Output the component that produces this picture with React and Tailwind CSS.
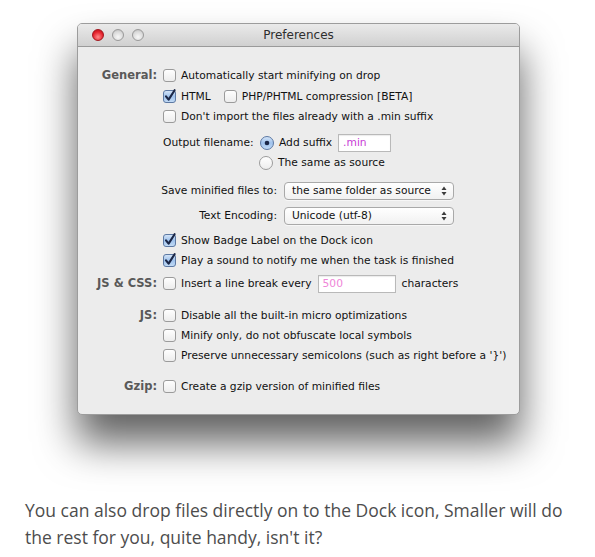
import { Fragment } from "react";

const ui = { fontFamily: '"DejaVu Sans", "Liberation Sans", sans-serif' };

function Checkbox({ checked = false }) {
    return (
        <svg width="13" height="13" viewBox="0 0 13 13" className="shrink-0 overflow-visible">
            <defs>
                <linearGradient id="cbOff" x1="0" y1="0" x2="0" y2="1">
                    <stop offset="0" stopColor="#ffffff" />
                    <stop offset="1" stopColor="#ececec" />
                </linearGradient>
                <linearGradient id="cbOn" x1="0" y1="0" x2="0" y2="1">
                    <stop offset="0" stopColor="#d7e6f8" />
                    <stop offset="0.5" stopColor="#9fc2ec" />
                    <stop offset="1" stopColor="#c4dcf6" />
                </linearGradient>
            </defs>
            <rect
                x="0.5"
                y="0.5"
                width="12"
                height="12"
                rx="2.5"
                fill={checked ? "url(#cbOn)" : "url(#cbOff)"}
                stroke={checked ? "#5d79a3" : "#9b9b9b"}
            />
            {checked && (
                <path
                    d="M3 6.3 L5.6 9.6 L11.6 0.2"
                    fill="none"
                    stroke="#1b2747"
                    strokeWidth="2.1"
                    strokeLinecap="round"
                    strokeLinejoin="round"
                />
            )}
        </svg>
    );
}

function Radio({ checked = false }) {
    return (
        <svg width="14" height="14" viewBox="0 0 14 14" className="shrink-0">
            <defs>
                <linearGradient id="rdOff" x1="0" y1="0" x2="0" y2="1">
                    <stop offset="0" stopColor="#ffffff" />
                    <stop offset="1" stopColor="#ececec" />
                </linearGradient>
                <linearGradient id="rdOn" x1="0" y1="0" x2="0" y2="1">
                    <stop offset="0" stopColor="#d7e6f8" />
                    <stop offset="0.5" stopColor="#9fc2ec" />
                    <stop offset="1" stopColor="#c4dcf6" />
                </linearGradient>
            </defs>
            <circle
                cx="7"
                cy="7"
                r="6.5"
                fill={checked ? "url(#rdOn)" : "url(#rdOff)"}
                stroke={checked ? "#5d79a3" : "#9b9b9b"}
            />
            {checked && <circle cx="7" cy="7" r="2.3" fill="#1b2747" />}
        </svg>
    );
}

function Check({ checked, children }) {
    return (
        <div className="flex items-center gap-[5px]">
            <Checkbox checked={checked} />
            <span>{children}</span>
        </div>
    );
}

function Field({ value, width, pale }) {
    return (
        <div
            className={`flex h-[18px] items-center border border-[#b9b9b9] bg-white pl-[4px] shadow-[inset_0_1px_1px_rgba(0,0,0,0.08)] ${width} ${
                pale ? "text-[#ef86d8]" : "text-[#c83cd6]"
            }`}
        >
            {value}
        </div>
    );
}

function Popup({ value }) {
    return (
        <div className="flex h-[18px] w-[170px] items-center justify-between rounded-[4px] border border-[#a9a9a9] bg-[linear-gradient(#ffffff,#f1f1f1)] pl-[7px] pr-[6px] shadow-[0_1px_0_rgba(255,255,255,0.6)]">
            <span>{value}</span>
            <svg width="6" height="10" viewBox="0 0 6 10">
                <path d="M3 0.5 L5.5 4 L0.5 4 Z" fill="#3c3c3c" />
                <path d="M3 9.5 L5.5 6 L0.5 6 Z" fill="#3c3c3c" />
            </svg>
        </div>
    );
}

function PopupRow({ label, value }) {
    return (
        <div className="flex items-center gap-[7px]">
            <div className="flex w-[114px] justify-end">
                <span className="shrink-0 whitespace-nowrap">{label}</span>
            </div>
            <Popup value={value} />
        </div>
    );
}

const sections = [
    { label: "General:", mt: "", content: <Check>Automatically start minifying on drop</Check> },
    {
        mt: "mt-[1px]",
        content: (
            <div className="flex items-center gap-[13px]">
                <Check checked>HTML</Check>
                <Check>PHP/PHTML compression [BETA]</Check>
            </div>
        ),
    },
    { mt: "", content: <Check>Don't import the files already with a .min suffix</Check> },
    {
        mt: "mt-[6px]",
        content: (
            <div className="flex items-center">
                <span className="w-[97px]">Output filename:</span>
                <div className="flex items-center gap-[5px]">
                    <Radio checked />
                    <span>Add suffix</span>
                    <Field value=".min" width="ml-[1px] w-[53px]" />
                </div>
            </div>
        ),
    },
    {
        mt: "",
        content: (
            <div className="flex items-center gap-[5px] pl-[96px]">
                <Radio />
                <span>The same as source</span>
            </div>
        ),
    },
    {
        mt: "mt-[8px]",
        content: <PopupRow label="Save minified files to:" value="the same folder as source" />,
    },
    {
        mt: "mt-[5px]",
        content: <PopupRow label="Text Encoding:" value="Unicode (utf-8)" />,
    },
    { mt: "mt-[5px]", content: <Check checked>Show Badge Label on the Dock icon</Check> },
    { mt: "", content: <Check checked>Play a sound to notify me when the task is finished</Check> },
    {
        label: "JS & CSS:",
        mt: "mt-[3px]",
        content: (
            <div className="flex items-center gap-[6px]">
                <Check>Insert a line break every</Check>
                <Field value="500" width="w-[78px]" pale />
                <span>characters</span>
            </div>
        ),
    },
    { label: "JS:", mt: "mt-[12px]", content: <Check>Disable all the built-in micro optimizations</Check> },
    { mt: "", content: <Check>Minify only, do not obfuscate local symbols</Check> },
    { mt: "", content: <Check>Preserve unnecessary semicolons (such as right before a '}')</Check> },
    { label: "Gzip:", mt: "mt-[11px]", content: <Check>Create a gzip version of minified files</Check> },
];

function TrafficLight({ red }) {
    return (
        <span
            className={`h-[12px] w-[12px] rounded-full border ${
                red
                    ? "border-[#a3141c] bg-[radial-gradient(circle_at_50%_70%,#ff8a8a,#e5222c_60%,#b0131b)]"
                    : "border-[#9a9a9a] bg-[radial-gradient(circle_at_50%_70%,#f8f8f8,#dadada_60%,#b5b5b5)]"
            }`}
        />
    );
}

export default function App() {
    return (
        <div className="min-h-[557px] bg-white pt-[23px]">
            <div
                className="ml-[77px] w-[443px] overflow-hidden rounded-[5px] border border-[#9c9c9c] bg-[#ececec] text-[10.7px] text-[#111] shadow-[0_28px_40px_rgba(0,0,0,0.62)]"
                style={ui}
            >
                <div className="relative flex h-[23px] items-center border-b border-[#9a9a9a] bg-[linear-gradient(#eaeaea,#d0d0d0)] px-[14px]">
                    <div className="flex items-center gap-[8px]">
                        <TrafficLight red />
                        <TrafficLight />
                        <TrafficLight />
                    </div>
                    <span className="absolute inset-x-0 text-center text-[12px] text-[#2e2e2e]">
                        Preferences
                    </span>
                </div>

                <div className="grid grid-cols-[79px_1fr] gap-x-[6px] pb-[17px] pt-[19px]">
                    {sections.map((row, i) => (
                        <Fragment key={i}>
                            <div
                                className={`flex h-[20px] items-center justify-end whitespace-nowrap text-[11.5px] font-bold text-[#595959] ${row.mt}`}
                            >
                                {row.label}
                            </div>
                            <div className={`flex h-[20px] items-center ${row.mt}`}>{row.content}</div>
                        </Fragment>
                    ))}
                </div>
            </div>

            <p
                className="ml-[25px] mt-[82px] w-[560px] text-[17.5px] leading-[27px] text-[#4d4d4d]"
                style={{ fontFamily: '"Open Sans", Lato, sans-serif' }}
            >
                You can also drop files directly on to the Dock icon, Smaller will do the rest for you,
                quite handy, isn't it?
            </p>
        </div>
    );
}
